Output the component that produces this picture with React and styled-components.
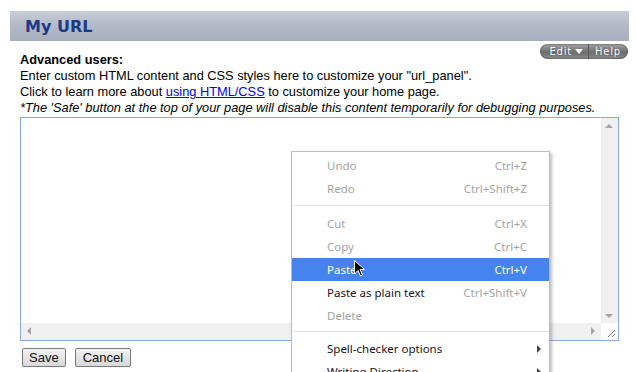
import React from 'react';
import styled, { createGlobalStyle } from 'styled-components';

const Global = createGlobalStyle`
  html, body {
    margin: 0;
    background: #fff;
  }
  body {
    font-family: "Liberation Sans", Arial, sans-serif;
    color: #000;
  }
`;

const Page = styled.div`
  position: relative;
  width: 636px;
  height: 372px;
  overflow: hidden;
  padding-top: 11px;
  box-sizing: border-box;
`;

const Header = styled.div`
  margin: 0 7px 0 10px;
  height: 30px;
  padding-left: 15px;
  background: linear-gradient(#c9ced8, #b4bac7 45%, #a8afbe);
  font-family: "DejaVu Sans", Verdana, sans-serif;
  font-weight: bold;
  font-size: 16px;
  line-height: 31px;
  color: #1b3b86;
`;

const Content = styled.div`
  padding: 3px 8px 0 20px;
`;

const ToolRow = styled.div`
  display: flex;
  justify-content: flex-end;
  height: 15px;
  margin-bottom: -7px;
`;

const Pill = styled.div`
  display: flex;
  align-items: stretch;
  height: 15px;
  border-radius: 8px;
  background: linear-gradient(#a4a4a4, #6d6d6d 55%, #8a8a8a);
  box-shadow: inset 0 0 0 1px rgba(60, 60, 60, 0.35);
  font-family: "DejaVu Sans", Verdana, sans-serif;
  font-size: 10px;
  letter-spacing: 0.8px;
  color: #fff;
  text-shadow: 0 0 1px rgba(0, 0, 0, 0.4);
`;

const PillPart = styled.div`
  display: flex;
  align-items: center;
  gap: 3px;
  padding: ${({ left }) => (left ? '0 5px 0 9px' : '0 7px 0 6px')};
  border-left: ${({ left }) => (left ? 'none' : '1px solid #5a5a5a')};
  line-height: 15px;
`;

const Intro = styled.div`
  font-size: 12.8px;
  line-height: 16px;
`;

const Strong = styled.div`
  font-weight: bold;
`;

const Link = styled.a`
  color: #0000ee;
  text-decoration: underline;
`;

const Note = styled.div`
  font-style: italic;
`;

const Editor = styled.div`
  margin-top: 1px;
  width: 599px;
  height: 224px;
  box-sizing: border-box;
  border: 1px solid #86a9e6;
  display: grid;
  grid-template-columns: 1fr 17px;
  grid-template-rows: 1fr 17px;
`;

const Surface = styled.div`
  background: #fff;
`;

const VScroll = styled.div`
  background: #f0f0f0;
  display: flex;
  flex-direction: column;
  justify-content: space-between;
  align-items: center;
  padding: 6px 0 4px;
`;

const HScroll = styled.div`
  background: #f0f0f0;
  display: flex;
  justify-content: space-between;
  align-items: center;
  padding: 0 5px 0 6px;
`;

const Corner = styled.div`
  background: #fff;
  display: flex;
  align-items: flex-end;
  justify-content: flex-end;
  padding: 0 2px 2px 0;
`;

const Arrow = ({ dir }) => {
  const pts = {
    up: '0,4 4,0 8,4',
    down: '0,0 8,0 4,4',
    left: '4,0 4,8 0,4',
    right: '0,0 0,8 4,4',
  }[dir];
  const horiz = dir === 'left' || dir === 'right';
  return (
    <svg width={horiz ? 5 : 9} height={horiz ? 9 : 5} viewBox={horiz ? '0 0 5 9' : '0 0 9 5'}>
      <polygon points={pts} fill="#a3a3a3" />
    </svg>
  );
};

const Actions = styled.div`
  display: flex;
  gap: 9px;
  margin: 7px 0 0 2px;
`;

const Button = styled.button`
  height: 19px;
  padding: 0 ${({ pad }) => pad}px;
  border: 1px solid #7a7a7a;
  border-radius: 2px;
  background: linear-gradient(#f4f4f4, #e4e4e4 50%, #d9d9d9);
  font-family: "Liberation Sans", Arial, sans-serif;
  font-size: 13px;
  line-height: 17px;
  color: #111;
`;

const Menu = styled.div`
  position: absolute;
  left: 291px;
  top: 151px;
  width: 259px;
  box-sizing: border-box;
  background: #fff;
  border: 1px solid #bdbdbd;
  box-shadow: 2px 2px 3px rgba(0, 0, 0, 0.25);
  padding-top: 2px;
  font-family: "Noto Sans", "Open Sans", sans-serif;
  font-size: 11.5px;
`;

const Item = styled.div`
  position: relative;
  display: flex;
  align-items: center;
  height: 23px;
  padding: 0 22px 0 35px;
  color: ${({ active, disabled }) => (active ? '#fff' : disabled ? '#a2a2a2' : '#1a1020')};
  background: ${({ active }) => (active ? '#4584ee' : 'transparent')};
`;

const Label = styled.span`
  flex: 1;
`;

const Shortcut = styled.span`
  color: ${({ active }) => (active ? '#fff' : '#a2a2a2')};
`;

const Sep = styled.div`
  height: 1px;
  background: #e3e3e3;
  margin: ${({ m }) => m};
`;

const SubArrow = styled.span`
  position: absolute;
  right: 8px;
  top: 8px;
  width: 0;
  height: 0;
  border-top: 4px solid transparent;
  border-bottom: 4px solid transparent;
  border-left: 4px solid #444;
`;

const Cursor = styled.svg`
  position: absolute;
  left: 62px;
  top: 108px;
`;

const items = [
  { label: 'Undo', key: 'Ctrl+Z', disabled: true },
  { label: 'Redo', key: 'Ctrl+Shift+Z', disabled: true },
  { sep: '5px 0 6px' },
  { label: 'Cut', key: 'Ctrl+X', disabled: true },
  { label: 'Copy', key: 'Ctrl+C', disabled: true },
  { label: 'Paste', key: 'Ctrl+V', active: true },
  { label: 'Paste as plain text', key: 'Ctrl+Shift+V' },
  { label: 'Delete', disabled: true },
  { sep: '4px 0 5px' },
  { label: 'Spell-checker options', sub: true },
  { label: 'Writing Direction', sub: true },
];

export default function App() {
  return (
    <Page>
      <Global />
      <Header>My URL</Header>
      <Content>
        <ToolRow>
          <Pill>
            <PillPart left>
              Edit
              <svg width="8" height="5" viewBox="0 0 8 5">
                <polygon points="0,0 8,0 4,5" fill="#fff" />
              </svg>
            </PillPart>
            <PillPart>Help</PillPart>
          </Pill>
        </ToolRow>
        <Intro>
          <Strong>Advanced users:</Strong>
          <div>Enter custom HTML content and CSS styles here to customize your "url_panel".</div>
          <div>
            Click to learn more about <Link href="#">using HTML/CSS</Link> to customize your home page.
          </div>
          <Note>*The 'Safe' button at the top of your page will disable this content temporarily for debugging purposes.</Note>
        </Intro>
        <Editor>
          <Surface />
          <VScroll>
            <Arrow dir="up" />
            <Arrow dir="down" />
          </VScroll>
          <HScroll>
            <Arrow dir="left" />
            <Arrow dir="right" />
          </HScroll>
          <Corner>
            <svg width="9" height="9" viewBox="0 0 9 9">
              <line x1="1" y1="8" x2="8" y2="1" stroke="#777" strokeWidth="1" />
              <line x1="5" y1="8" x2="8" y2="5" stroke="#777" strokeWidth="1" />
            </svg>
          </Corner>
        </Editor>
        <Actions>
          <Button pad={6}>Save</Button>
          <Button pad={7}>Cancel</Button>
        </Actions>
      </Content>
      <Menu>
        {items.map((it, i) =>
          it.sep ? (
            <Sep key={i} m={it.sep} />
          ) : (
            <Item key={i} active={it.active} disabled={it.disabled}>
              <Label>{it.label}</Label>
              {it.key && <Shortcut active={it.active}>{it.key}</Shortcut>}
              {it.sub && <SubArrow />}
            </Item>
          )
        )}
        <Cursor width="11" height="17" viewBox="0 0 11 17">
          <polygon points="0.5,0.5 0.5,14 4,10.5 6.5,16 8.5,15 6,9.5 10.5,9.5" fill="#000" stroke="#fff" strokeWidth="1" />
        </Cursor>
      </Menu>
    </Page>
  );
}
